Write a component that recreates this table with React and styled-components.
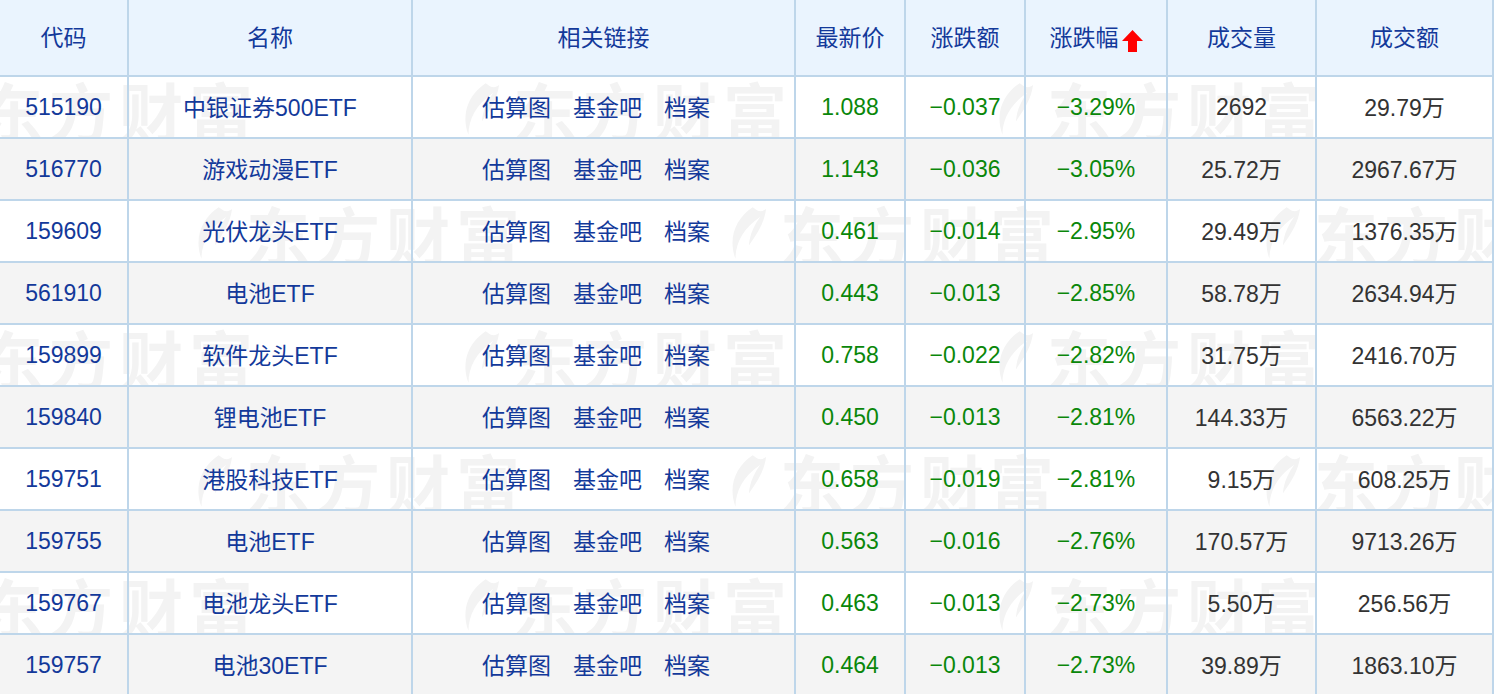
import React from "react";
import styled, { createGlobalStyle } from "styled-components";

const GlobalStyle = createGlobalStyle`
	html,
	body {
		margin: 0;
		padding: 0;
		background: #fff;
	}
	body {
		font-family: "Liberation Sans", "Noto Sans CJK SC", sans-serif;
	}
`;

const COLS = "129px 284px 383px 110px 120px 142px 149px 177px";
const LINE = "#bed6ea";
const MARK = "#f3f3f3";

const Wrap = styled.div`
	position: relative;
	width: 1494px;
	height: 694px;
	overflow: hidden;
	background: #fff;
`;

const Marks = styled.div`
	position: absolute;
	inset: 0;
	z-index: 0;
	pointer-events: none;
`;

/* watermark lettering is decoration only, so it lives in a pseudo element */
const Mark = styled.div`
	position: absolute;
	display: flex;
	align-items: center;
	gap: 12px;
	height: 60px;

	&::after {
		content: "东方财富";
		color: ${MARK};
		font-family: "Noto Sans CJK SC", sans-serif;
		font-weight: 700;
		font-size: 64px;
		line-height: 1;
		letter-spacing: 6px;
		white-space: nowrap;
	}
`;

const Row = styled.div`
	position: relative;
	z-index: 1;
	display: grid;
	grid-template-columns: ${COLS};
	height: ${(p) => (p.$head ? 77 : 62)}px;
	background: ${(p) =>
		p.$head ? "#eaf4fe" : p.$alt ? "#f4f4f4" : "transparent"};
`;

const Cell = styled.div`
	display: flex;
	align-items: center;
	justify-content: center;
	box-sizing: border-box;
	padding-bottom: ${(p) => p.$lift || 0}px;
	border-right: 2px solid ${LINE};
	border-bottom: 2px solid ${LINE};
	font-size: 23px;
	white-space: nowrap;
	color: ${(p) =>
		p.$tone === "down" ? "#0a870a" : p.$tone === "plain" ? "#333" : "#13399a"};
`;

const Links = styled.div`
	display: flex;
	gap: 22px;
	padding-right: 15px;
`;

const A = styled.a`
	color: #13399a;
	text-decoration: none;
`;

const Arrow = styled.svg`
	margin-left: 3px;
	margin-top: 10px;
`;

const rows = [
	["515190", "中银证券500ETF", "1.088", "−0.037", "−3.29%", "2692", "29.79万"],
	["516770", "游戏动漫ETF", "1.143", "−0.036", "−3.05%", "25.72万", "2967.67万"],
	["159609", "光伏龙头ETF", "0.461", "−0.014", "−2.95%", "29.49万", "1376.35万"],
	["561910", "电池ETF", "0.443", "−0.013", "−2.85%", "58.78万", "2634.94万"],
	["159899", "软件龙头ETF", "0.758", "−0.022", "−2.82%", "31.75万", "2416.70万"],
	["159840", "锂电池ETF", "0.450", "−0.013", "−2.81%", "144.33万", "6563.22万"],
	["159751", "港股科技ETF", "0.658", "−0.019", "−2.81%", "9.15万", "608.25万"],
	["159755", "电池ETF", "0.563", "−0.016", "−2.76%", "170.57万", "9713.26万"],
	["159767", "电池龙头ETF", "0.463", "−0.013", "−2.73%", "5.50万", "256.56万"],
	["159757", "电池30ETF", "0.464", "−0.013", "−2.73%", "39.89万", "1863.10万"],
];

// mixed cjk text sits low on the latin baseline, so nudge it up a little
const lift = (s) => (/[\u4e00-\u9fff]/.test(s) ? 2 : 0);

// watermark tiles sit in the white rows, shifted by half a tile every other one
const marks = [];
[0, 2, 4, 6, 8].forEach((r, i) => {
	const start = i % 2 === 0 ? -77 : 190;
	for (let k = -1; k < 4; k++) {
		marks.push({ x: start + k * 534, y: 79 + r * 62 });
	}
});

function Swoosh() {
	return (
		<svg width="44" height="56" viewBox="0 0 46 58">
			<path
				d="M30 2 C12 14 4 34 12 56 C12 40 20 24 38 12 C32 20 27 30 26 42 C36 28 42 18 44 4 C39 8 35 6 30 2 Z"
				fill={MARK}
			/>
		</svg>
	);
}

function SortArrow() {
	return (
		<Arrow width="21" height="22" viewBox="0 0 21 22">
			<polygon points="10.5,0 21,11 15,11 15,22 6,22 6,11 0,11" fill="#f00" />
		</Arrow>
	);
}

const heads = ["代码", "名称", "相关链接", "最新价", "涨跌额", "涨跌幅", "成交量", "成交额"];

export default function App() {
	return (
		<Wrap>
			<GlobalStyle />
			<Marks>
				{marks.map((m) => (
					<Mark key={`${m.x}-${m.y}`} style={{ left: m.x, top: m.y }}>
						<Swoosh />
					</Mark>
				))}
			</Marks>
			<Row $head>
				{heads.map((h) => (
					<Cell key={h} $lift={4}>
						{h}
						{h === "涨跌幅" && <SortArrow />}
					</Cell>
				))}
			</Row>
			{rows.map((r, i) => (
				<Row key={r[0] + i} $alt={i % 2 === 1}>
					<Cell>{r[0]}</Cell>
					<Cell $lift={lift(r[1])}>{r[1]}</Cell>
					<Cell $lift={2}>
						<Links>
							<A href="#">估算图</A>
							<A href="#">基金吧</A>
							<A href="#">档案</A>
						</Links>
					</Cell>
					<Cell $tone="down">{r[2]}</Cell>
					<Cell $tone="down">{r[3]}</Cell>
					<Cell $tone="down">{r[4]}</Cell>
					<Cell $tone="plain" $lift={lift(r[5])}>{r[5]}</Cell>
					<Cell $tone="plain" $lift={lift(r[6])}>{r[6]}</Cell>
				</Row>
			))}
		</Wrap>
	);
}
